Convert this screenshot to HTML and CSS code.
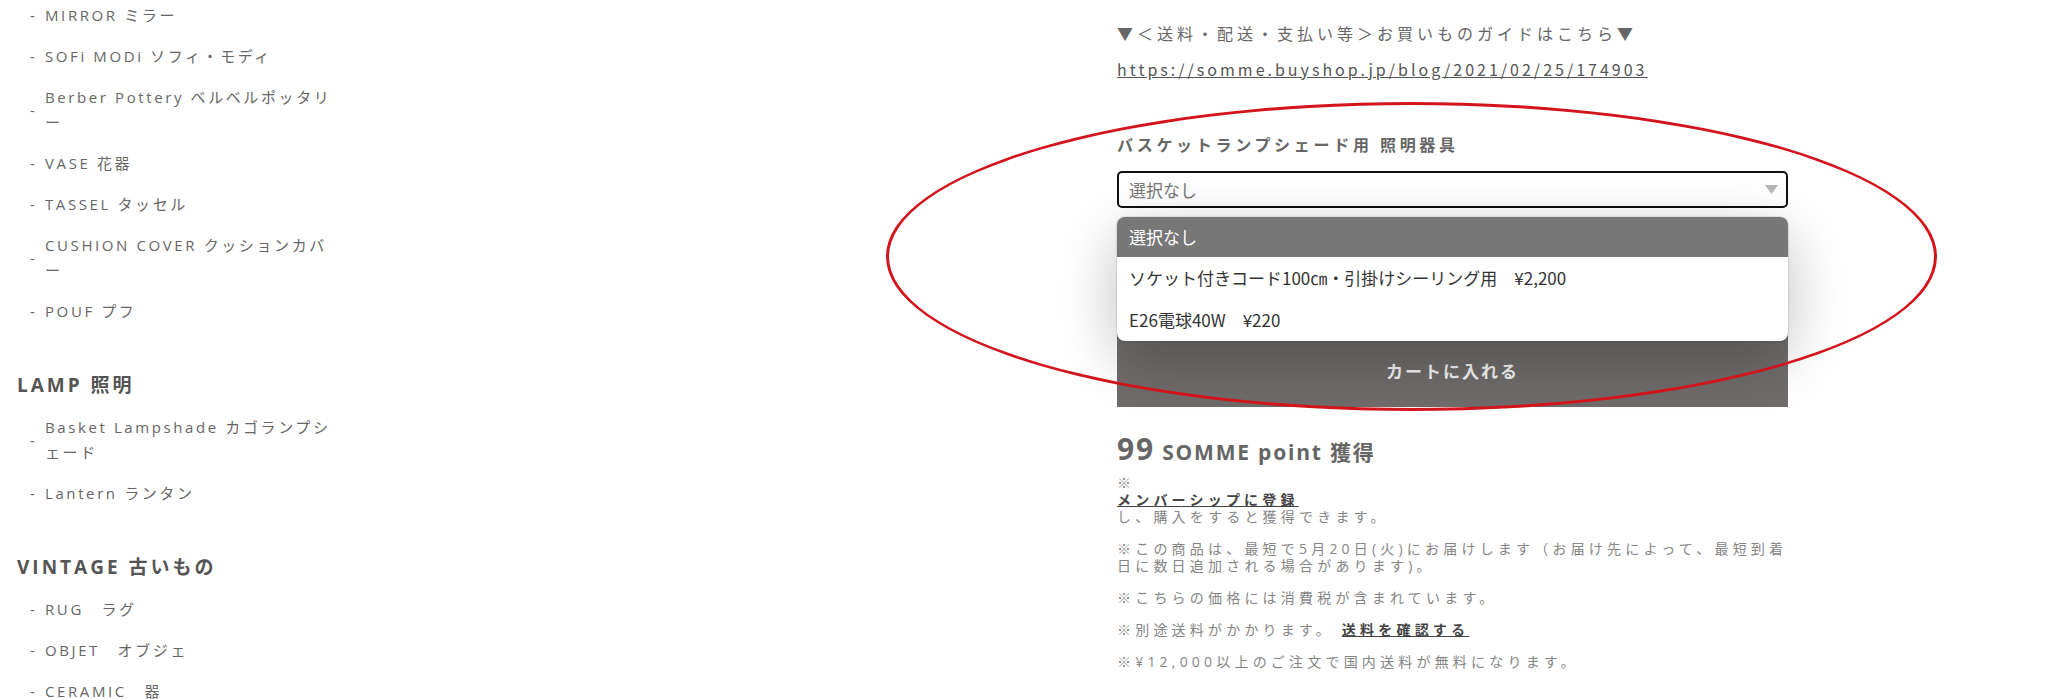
FILE: index.html
```html
<!DOCTYPE html>
<html lang="ja">
<head>
    <meta charset="UTF-8">
    <meta name="viewport" content="width=device-width, initial-scale=1.0">
    <title>Basket Lampshade | SOMME</title>
    <link rel="stylesheet" href="styles.css">
</head>
<body>

<div class="page">

    <aside class="sidebar">
        <ul class="cat-list first">
            <li><span class="dash">-</span><span class="cat-name">MIRROR ミラー</span></li>
            <li><span class="dash">-</span><span class="cat-name">SOFi MODi ソフィ・モディ</span></li>
            <li><span class="dash">-</span><span class="cat-name">Berber Pottery ベルベルポッタリー</span></li>
            <li><span class="dash">-</span><span class="cat-name">VASE 花器</span></li>
            <li><span class="dash">-</span><span class="cat-name">TASSEL タッセル</span></li>
            <li><span class="dash">-</span><span class="cat-name">CUSHION COVER クッションカバー</span></li>
            <li><span class="dash">-</span><span class="cat-name">POUF プフ</span></li>
        </ul>

        <h3 class="cat-head">LAMP 照明</h3>
        <ul class="cat-list">
            <li><span class="dash">-</span><span class="cat-name">Basket Lampshade カゴランプシェード</span></li>
            <li><span class="dash">-</span><span class="cat-name">Lantern ランタン</span></li>
        </ul>

        <h3 class="cat-head">VINTAGE 古いもの</h3>
        <ul class="cat-list">
            <li><span class="dash">-</span><span class="cat-name">RUG　ラグ</span></li>
            <li><span class="dash">-</span><span class="cat-name">OBJET　オブジェ</span></li>
            <li><span class="dash">-</span><span class="cat-name">CERAMIC　器</span></li>
        </ul>
    </aside>

    <main class="product">
        <p class="guide">▼＜送料・配送・支払い等＞お買いものガイドはこちら▼</p>
        <a class="guide-link" href="#">https://somme.buyshop.jp/blog/2021/02/25/174903</a>

        <div class="option">
            <label class="option-label">バスケットランプシェード用 照明器具</label>
            <div class="select-wrap">
                <div class="select">
                    <span>選択なし</span>
                    <svg class="arrow" width="13" height="9" viewBox="0 0 13 9"><path d="M0 0 H13 L6.5 9 Z" fill="#b9b9b9"/></svg>
                </div>
                <ul class="dropdown">
                    <li class="selected">選択なし</li>
                    <li>ソケット付きコード100㎝・引掛けシーリング用　¥2,200</li>
                    <li>E26電球40W　¥220</li>
                </ul>
            </div>
        </div>

        <button class="cart-btn" type="button">カートに入れる</button>

        <p class="points"><span class="points-num">99</span> SOMME point 獲得</p>

        <div class="notes">
            <p>※<br><a class="strong-link" href="#">メンバーシップに登録</a><br>し、購入をすると獲得できます。</p>
            <p>※この商品は、最短で5月20日(火)にお届けします（お届け先によって、最短到着日に数日追加される場合があります)。</p>
            <p>※こちらの価格には消費税が含まれています。</p>
            <p>※別途送料がかかります。 <a class="strong-link" href="#">送料を確認する</a></p>
            <p>※¥12,000以上のご注文で国内送料が無料になります。</p>
        </div>
    </main>

    <!-- red marker drawn over the screenshot -->
    <div class="marker"></div>
</div>

</body>
</html>
```

FILE: styles.css
```css
body {
    margin: 0;
    padding: 0;
    background-color: #fff;
    font-family: "Open Sans", "Noto Sans CJK JP", sans-serif;
    color: #666;
    overflow: hidden;
}

.page {
    position: relative;
    display: grid;
    grid-template-columns: 1117px 671px;
    height: 699px;
}

/* sidebar categories */
.sidebar {
    padding-left: 17px;
    margin-top: -5px;
}

.cat-list {
    list-style: none;
    margin: 0;
    padding: 0 0 0 13px;
}

.cat-list li {
    display: flex;
    align-items: center;
    padding: 8px 0;
    font-size: 15px;
    line-height: 25px;
    letter-spacing: 2.6px;
    color: #666;
}

.dash {
    width: 15px;
    flex: none;
    letter-spacing: 0;
}

.cat-name {
    width: 295px;
}

.cat-head {
    margin: 41px 0 9px;
    font-size: 19px;
    line-height: 25px;
    font-weight: 700;
    letter-spacing: 3px;
    color: #555;
}

/* product column */
.product {
    grid-column: 2;
    padding-top: 21px;
    font-family: "Noto Sans CJK JP", sans-serif;
}

.guide {
    margin: 0;
    font-size: 16px;
    line-height: 24px;
    letter-spacing: 4px;
    color: #666;
}

.guide-link {
    display: block;
    margin-top: 12px;
    font-size: 16px;
    line-height: 24px;
    letter-spacing: 3px;
    color: #555;
}

.option {
    margin-top: 51px;
}

.option-label {
    display: block;
    font-size: 16px;
    line-height: 24px;
    font-weight: 700;
    letter-spacing: 3.7px;
    color: #666;
}

.select-wrap {
    position: relative;
    margin-top: 15px;
}

.select {
    display: flex;
    justify-content: space-between;
    align-items: center;
    height: 37px;
    box-sizing: border-box;
    padding: 0 8px 0 10px;
    border: 2px solid #111;
    border-radius: 5px;
    font-size: 17px;
    color: #777;
}

.dropdown {
    position: absolute;
    top: 46px;
    left: 0;
    right: 0;
    z-index: 2;
    margin: 0;
    padding: 0;
    list-style: none;
    background-color: #fff;
    border-radius: 8px;
    overflow: hidden;
    box-shadow: 0 18px 60px rgba(0, 0, 0, 0.25), 0 0 2px rgba(0, 0, 0, 0.3);
}

.dropdown li {
    height: 42px;
    line-height: 42px;
    padding-left: 12px;
    font-size: 17px;
    color: #333;
}

.dropdown li.selected {
    height: 40px;
    line-height: 40px;
    background-color: #777;
    color: #fff;
}

.cart-btn {
    display: block;
    width: 100%;
    height: 74px;
    margin-top: 125px;
    border: none;
    background-color: #6f6c6b;
    font-family: "Noto Sans CJK JP", sans-serif;
    font-size: 17px;
    font-weight: 700;
    letter-spacing: 2px;
    color: #f2f2f2;
}

.points {
    margin: 26px 0 0;
    font-family: "Open Sans", "Noto Sans CJK JP", sans-serif;
    font-size: 21px;
    line-height: 32px;
    font-weight: 700;
    letter-spacing: 1.8px;
    color: #666;
}

.points-num {
    font-size: 30px;
}

.notes {
    margin-top: 6px;
    font-family: "Open Sans", "Noto Sans CJK JP", sans-serif;
    font-size: 14px;
    line-height: 17px;
    letter-spacing: 4.2px;
    color: #858585;
}

.notes p {
    margin: 0 0 15px;
}

.strong-link {
    font-weight: 700;
    color: #444;
}

/* annotation ellipse */
.marker {
    position: absolute;
    left: 886px;
    top: 102px;
    width: 1051px;
    height: 309px;
    box-sizing: border-box;
    border: 3px solid #d3141c;
    border-radius: 50%;
    z-index: 5;
    pointer-events: none;
}
```
